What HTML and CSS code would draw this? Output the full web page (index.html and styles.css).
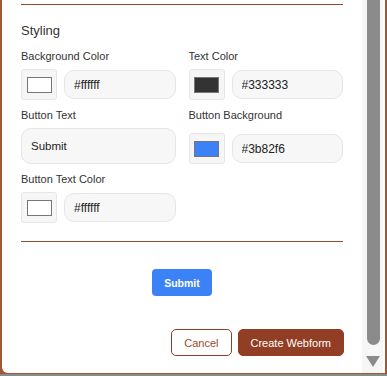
FILE: index.html
```html
<!DOCTYPE html>
<html lang="en">
<head>
	<meta charset="UTF-8">
	<title>Create Webform</title>
	<link rel="stylesheet" href="styles.css">
</head>
<body>
	<div class="page">
		<div class="modal">
			<div class="modal-body">
				<hr class="rule rule-top">
				<h3 class="section-title">Styling</h3>
				<div class="grid">
					<div class="field">
						<label class="label">Background Color</label>
						<div class="color-row">
							<span class="swatch"><span class="chip chip-white"></span></span>
							<input class="text-input" type="text" value="#ffffff">
						</div>
					</div>
					<div class="field">
						<label class="label">Text Color</label>
						<div class="color-row">
							<span class="swatch"><span class="chip chip-dark"></span></span>
							<input class="text-input" type="text" value="#333333">
						</div>
					</div>
					<div class="field">
						<label class="label">Button Text</label>
						<input class="text-input text-input-tall" type="text" value="Submit">
					</div>
					<div class="field">
						<label class="label">Button Background</label>
						<div class="color-row">
							<span class="swatch"><span class="chip chip-blue"></span></span>
							<input class="text-input" type="text" value="#3b82f6">
						</div>
					</div>
					<div class="field">
						<label class="label">Button Text Color</label>
						<div class="color-row">
							<span class="swatch"><span class="chip chip-white"></span></span>
							<input class="text-input" type="text" value="#ffffff">
						</div>
					</div>
				</div>
				<hr class="rule rule-bottom">
				<div class="preview">
					<button class="preview-btn" type="button">Submit</button>
				</div>
				<div class="footer">
					<button class="btn btn-cancel" type="button">Cancel</button>
					<button class="btn btn-create" type="button">Create Webform</button>
				</div>
			</div>
			<div class="scrollbar">
				<div class="thumb"></div>
				<div class="arrow"></div>
			</div>
		</div>
	</div>
</body>
</html>
```

FILE: styles.css
```css
*{
	padding: 0;
	margin: 0;
	box-sizing: border-box;
}
body{
	background: #8a8a8a;
	font-family: "Liberation Sans", Arial, sans-serif;
	color: #333;
	width: 387px;
	height: 376px;
	overflow: hidden;
}
.page{
	background: #a0583a;
	height: 374px;
	padding-left: 2px;
	display: flex;
}
.modal{
	width: 383px;
	height: 373px;
	background: #fff;
	border-bottom-left-radius: 6px;
	display: flex;
	overflow: hidden;
}
.modal-body{
	width: 360px;
	padding: 4px 19px 0 19px;
}
.rule{
	border: none;
	height: 1px;
	background: #9a4a28;
}
.section-title{
	font-size: 13px;
	font-weight: normal;
	line-height: 16px;
	margin-top: 18px;
	color: #333;
}
.grid{
	display: grid;
	grid-template-columns: minmax(0, 1fr) minmax(0, 1fr);
	column-gap: 13px;
	row-gap: 8px;
	margin-top: 10px;
}
.field{
	display: flex;
	flex-direction: column;
	min-width: 0;
}
.label{
	font-size: 11px;
	line-height: 14px;
	margin-bottom: 6px;
	color: #333;
}
.color-row{
	display: flex;
	align-items: center;
	gap: 7px;
	margin-top: auto;
}
.swatch{
	width: 36px;
	height: 31px;
	border: 1px solid #e6e6e6;
	border-radius: 3px;
	background: #f6f6f6;
	display: flex;
	align-items: center;
	justify-content: center;
	flex-shrink: 0;
}
.chip{
	width: 25px;
	height: 16px;
	border: 1px solid #767676;
}
.chip-white{
	background: #fff;
}
.chip-dark{
	background: #333;
}
.chip-blue{
	background: #3b82f6;
}
.text-input{
	flex: 1;
	min-width: 0;
	width: 0;
	height: 29px;
	border: 1px solid #e6e6e6;
	border-radius: 10px;
	background: #f7f7f7;
	padding: 0 9px;
	font-family: "Liberation Sans", Arial, sans-serif;
	font-size: 12px;
	color: #222;
	outline: none;
}
.text-input-tall{
	flex: none;
	width: 100%;
	height: 36px;
	font-size: 11.5px;
}
.rule-bottom{
	margin-top: 18px;
}
.preview{
	display: flex;
	justify-content: center;
	margin-top: 27px;
}
.preview-btn{
	height: 27px;
	padding: 0 12px;
	border: none;
	border-radius: 4px;
	background: #3b82f6;
	color: #fff;
	font-family: "Liberation Sans", Arial, sans-serif;
	font-size: 10.5px;
	font-weight: bold;
}
.footer{
	display: flex;
	justify-content: flex-end;
	gap: 6px;
	margin-top: 33px;
	margin-right: -1px;
}
.btn{
	height: 27px;
	padding: 0 12px;
	border-radius: 5px;
	font-family: "Liberation Sans", Arial, sans-serif;
	font-size: 11px;
}
.btn-cancel{
	background: #fff;
	border: 1px solid #923e24;
	color: #9a4a30;
}
.btn-create{
	background: #923e24;
	border: 1px solid #923e24;
	color: #fff;
}
.scrollbar{
	width: 21px;
	background: #f6f6f6;
	display: flex;
	flex-direction: column;
	align-items: center;
	padding-left: 1px;
}
.thumb{
	width: 13px;
	height: 345px;
	background: #8b8b8b;
	border-radius: 0 0 7px 7px;
}
.arrow{
	margin-top: 11px;
	width: 0;
	height: 0;
	border-left: 7.5px solid transparent;
	border-right: 7.5px solid transparent;
	border-top: 11px solid #8b8b8b;
}
```
